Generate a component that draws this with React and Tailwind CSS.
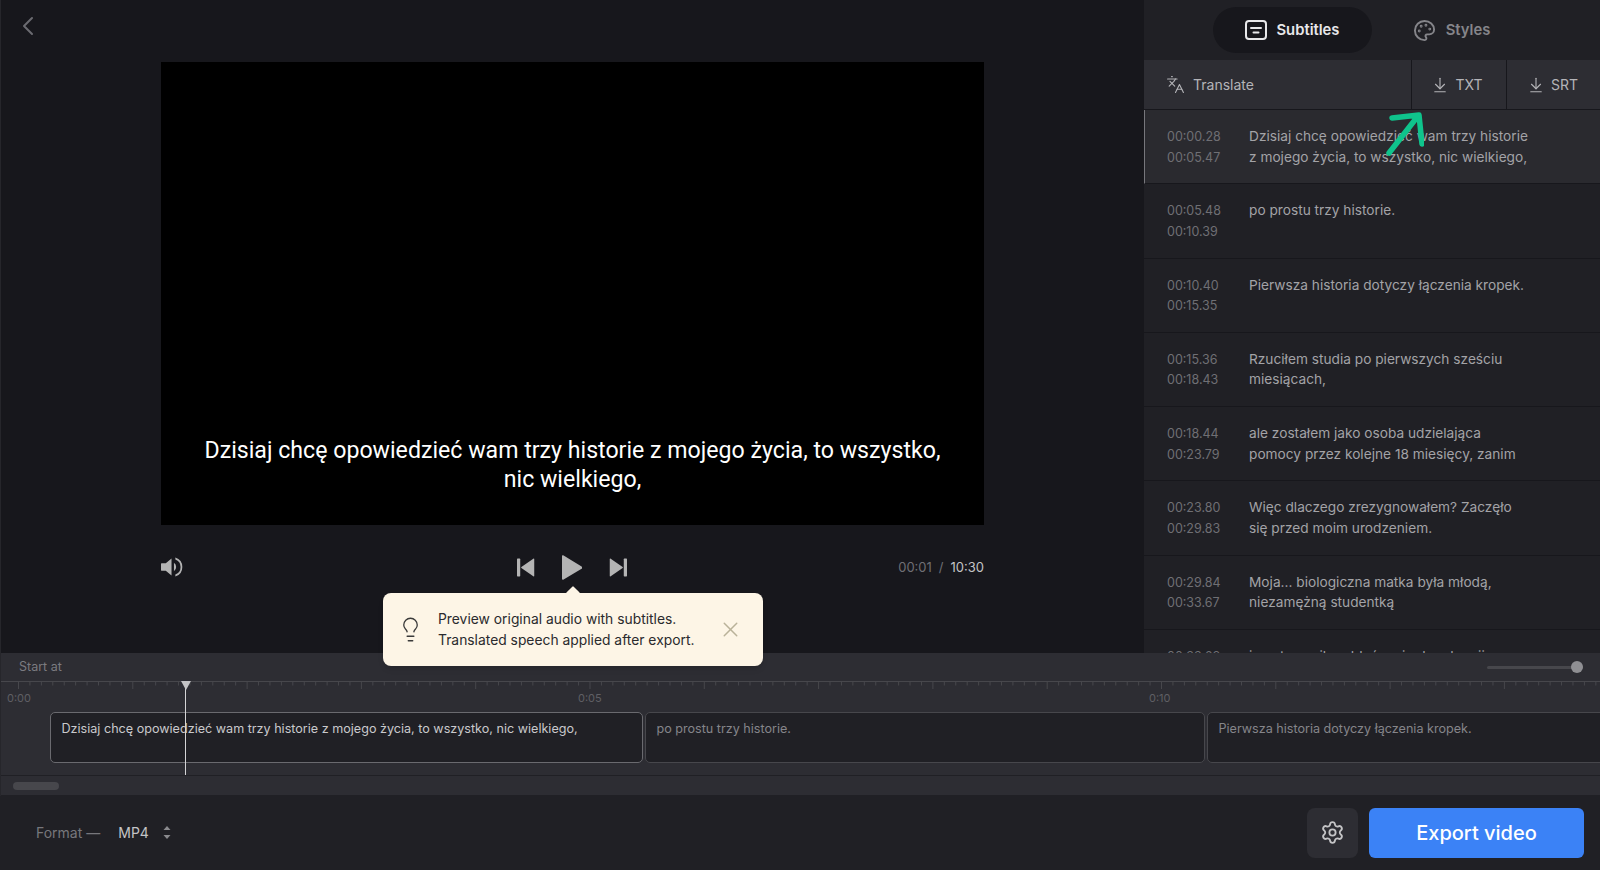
import React from "react";
import { ChevronLeft, Languages, ArrowDownToLine, Palette, Lightbulb, X, Settings } from "lucide-react";

const rows = [
  ["00:00.28", "00:05.47", "Dzisiaj chcę opowiedzieć wam trzy historie", "z mojego życia, to wszystko, nic wielkiego,"],
  ["00:05.48", "00:10.39", "po prostu trzy historie.", ""],
  ["00:10.40", "00:15.35", "Pierwsza historia dotyczy łączenia kropek.", ""],
  ["00:15.36", "00:18.43", "Rzuciłem studia po pierwszych sześciu", "miesiącach,"],
  ["00:18.44", "00:23.79", "ale zostałem jako osoba udzielająca", "pomocy przez kolejne 18 miesięcy, zanim"],
  ["00:23.80", "00:29.83", "Więc dlaczego zrezygnowałem? Zaczęło", "się przed moim urodzeniem."],
  ["00:29.84", "00:33.67", "Moja... biologiczna matka była młodą,", "niezamężną studentką"],
  ["00:33.68", "00:38.12", "i postanowiła oddać mnie do adopcji.", ""],
];

const ticks = Array.from({ length: 140 }, (_, i) => i);

function SubtitleRow({ r, active }) {
  return (
    <div className={`h-[74.3px] shrink-0 flex pt-[16px] border-b border-[#17171c] leading-[20.5px] ${active ? "bg-[#2a2a2f] border-l border-l-[#77777c] pl-[22px]" : "pl-[23px]"}`}>
      <div className="w-[82px] shrink-0 text-[#6f6f74] text-[12.5px] pt-[1px]">
        <div>{r[0]}</div>
        <div>{r[1]}</div>
      </div>
      <div className="text-[#a3a3a7] whitespace-nowrap text-[13.7px]">
        <div>{r[2]}</div>
        <div>{r[3]}</div>
      </div>
    </div>
  );
}

function Clip({ width, active, children }) {
  return (
    <div className={`h-[51px] shrink-0 rounded-[5px] bg-[#202025] pl-[10.5px] pt-[7px] text-[12.6px] leading-[18px] whitespace-nowrap ${active ? "border-[1.5px] border-[#6a6a6f] text-[#c9c9cc]" : "border border-[#47474c] text-[#85858a]"}`} style={{ width }}>
      {children}
    </div>
  );
}

export default function App() {
  return (
    <div className="w-[1600px] h-[870px] overflow-hidden flex flex-col bg-[#17171c] font-['Inter','Noto_Sans',sans-serif]">
      <div className="h-[653px] shrink-0 flex relative">
        {/* Editor */}
        <div className="w-[1144px] shrink-0 border-l border-[#26262b] relative z-10">
          <div className="h-[62px] pl-[11px] pt-[10px] text-[#6b6b70]">
            <ChevronLeft size={32} strokeWidth={1.5} />
          </div>
          <div className="ml-[160px] w-[823px] h-[463px] bg-black flex flex-col items-center justify-end pb-[31px] text-white font-['Roboto',sans-serif] text-[23.15px] leading-[28.5px]">
            <div>Dzisiaj chcę opowiedzieć wam trzy historie z mojego życia, to wszystko,</div>
            <div>nic wielkiego,</div>
          </div>
          <div className="ml-[160px] w-[823px] h-[84px] grid grid-cols-3 items-center">
            <svg width="22" height="22" viewBox="0 0 23 22" fill="#b4b4b4">
              <path d="M0.5 7h4.5L11 2v18l-6-5H0.5a.5.5 0 0 1-.5-.5v-7a.5.5 0 0 1 .5-.5z" />
              <path d="M13.5 6.5a5.5 5.5 0 0 1 0 9z" />
              <path d="M15 1a10.5 10.5 0 0 1 0 20v-2.2a8.3 8.3 0 0 0 0-15.6z" />
            </svg>
            <div className="flex items-center justify-center gap-[27px] pr-[1px]">
              <svg width="18" height="19" viewBox="0 0 19 19" fill="#b4b4b4">
                <rect x="0" y="0" width="3.4" height="19" rx="0.7" />
                <path d="M18.2 0.6v17.8a.6.6 0 0 1-1 .4L4.6 10a.7.7 0 0 1 0-1L17.2.2a.6.6 0 0 1 1 .4z" />
              </svg>
              <svg width="20" height="25" viewBox="0 0 20 25" fill="#b4b4b4">
                <path d="M0 1.2v22.6a1 1 0 0 0 1.6.8l18-10.8a1.3 1.3 0 0 0 0-2.2L1.6.4A1 1 0 0 0 0 1.2z" />
              </svg>
              <svg width="18" height="19" viewBox="0 0 19 19" fill="#b4b4b4">
                <rect x="15.6" y="0" width="3.4" height="19" rx="0.7" />
                <path d="M.8.6v17.8a.6.6 0 0 0 1 .4L14.4 10a.7.7 0 0 0 0-1L1.8.2a.6.6 0 0 0-1 .4z" />
              </svg>
            </div>
            <div className="text-right text-[13px] text-[#6f6f74] pt-[2px]">
              00:01<span className="mx-[7px]">/</span><span className="text-[#c4c4c6]">10:30</span>
            </div>
          </div>
          {/* Hint tooltip */}
          <div className="absolute left-[382px] top-[593px] w-[380px] h-[73px] rounded-[8px] bg-[#fdf5e6] flex items-center pl-[14px] shadow-md">
            <div className="absolute -top-[5px] left-[185px] w-[10px] h-[10px] rotate-45 bg-[#fdf5e6] rounded-[1px]" />
            <Lightbulb size={27} strokeWidth={1.15} className="text-[#3a3a3a] shrink-0" />
            <div className="ml-[14px] text-[13.85px] leading-[20.5px] text-[#2a2a2d] whitespace-nowrap">
              <div>Preview original audio with subtitles.</div>
              <div>Translated speech applied after export.</div>
            </div>
            <X size={25} strokeWidth={1.4} className="ml-[24px] text-[#b9b299] shrink-0" />
          </div>
        </div>

        {/* Sidebar */}
        <div className="flex-1 min-w-0 bg-[#202025] flex flex-col relative">
          <div className="h-[60px] shrink-0 flex items-start justify-center pt-[7px]">
            <div className="w-[159px] h-[46px] rounded-full bg-[#17171c] flex items-center justify-center gap-[9px] text-[#e8e8ea] text-[14.8px] font-semibold">
              <svg width="22" height="20" viewBox="0 0 22 20" fill="none" stroke="#e8e8ea" strokeWidth="2" strokeLinecap="round">
                <rect x="1" y="1" width="20" height="18" rx="3" />
                <path d="M6 8h10M8.5 12.5h5" />
              </svg>
              <span className="pt-[1px]">Subtitles</span>
            </div>
            <div className="w-[159px] h-[46px] flex items-center justify-center gap-[10px] text-[#85858a] text-[14.8px] font-semibold">
              <Palette size={23} strokeWidth={2} />
              <span className="pt-[1px]">Styles</span>
            </div>
          </div>
          <div className="h-[50px] shrink-0 flex bg-[#2d2d33] border-b border-[#17171c] text-[14px] text-[#b4b4b8]">
            <div className="w-[267px] shrink-0 flex items-center pl-[22px] gap-[8px]">
              <Languages size={19} strokeWidth={1.4} />
              Translate
            </div>
            <div className="w-[95px] shrink-0 flex items-center justify-center gap-[6px] border-l border-[#17171c] pr-[4px]">
              <ArrowDownToLine size={18} strokeWidth={1.5} />
              TXT
            </div>
            <div className="flex-1 flex items-center justify-center gap-[6px] border-l border-[#17171c] pr-[2px]">
              <ArrowDownToLine size={18} strokeWidth={1.5} />
              SRT
            </div>
          </div>
          <div className="flex-1 min-h-0 overflow-hidden">
            {rows.map((r, i) => (
              <SubtitleRow key={r[0]} r={r} active={i === 0} />
            ))}
          </div>
          <svg className="absolute left-[242px] top-[112px]" width="38" height="44" viewBox="0 0 38 44" fill="none" stroke="#0fc48c" strokeWidth="5.5" strokeLinecap="round" strokeLinejoin="round">
            <path d="M3 41 32 4M6 6 33 3l3 29" />
          </svg>
        </div>
      </div>

      {/* Timeline */}
      <div className="h-[143px] shrink-0 bg-[#2d2d33] border-l border-[#26262b] flex flex-col relative overflow-hidden">
        <div className="h-[28px] shrink-0 flex items-center justify-between pl-[18px] pr-[17px] text-[12.5px] text-[#7b7b80]">
          <span>Start at</span>
          <div className="w-[96px] h-[3px] rounded-full bg-[#47474c] relative">
            <div className="absolute right-0 -top-[4.5px] w-[12px] h-[12px] rounded-full bg-[#8f8f93]" />
          </div>
        </div>
        <svg className="shrink-0 block -ml-px" width="1600" height="10" viewBox="0 0 1600 10">
          <line x1="0" y1="0.5" x2="1600" y2="0.5" stroke="#47474c" />
          {ticks.map((i) => (
            <line key={i} x1={18.5 + i * 11.43} y1="1" x2={18.5 + i * 11.43} y2={i % 10 === 0 ? 8 : 4.5} stroke="#47474c" />
          ))}
        </svg>
        <div className="h-[21px] shrink-0 flex pl-[6px] pb-[7px] items-center text-[11px] text-[#5f5f64]">
          <div className="w-[571px] shrink-0">0:00</div>
          <div className="w-[571px] shrink-0">0:05</div>
          <div className="w-[171px] shrink-0">0:10</div>
        </div>
        <div className="h-[51px] shrink-0 flex gap-[2px] pl-[49px]">
          <Clip width={593} active>Dzisiaj chcę opowiedzieć wam trzy historie z mojego życia, to wszystko, nic wielkiego,</Clip>
          <Clip width={560}>po prostu trzy historie.</Clip>
          <Clip width={500}>Pierwsza historia dotyczy łączenia kropek.</Clip>
        </div>
        <div className="h-[12px] shrink-0" />
        <div className="h-[21px] shrink-0 border-y border-[#202025] pl-[13px] pt-[6px] -ml-px">
          <div className="w-[46px] h-[8px] rounded-full bg-[#47474c]" />
        </div>
        {/* Playhead */}
        <div className="absolute left-[184px] top-[28px] h-[94px] w-px bg-[#d4d4d6]" />
        <div className="absolute left-[179.5px] top-[28px] w-0 h-0 border-x-[5px] border-x-transparent border-t-[9px] border-t-[#c4c4c6]" />
      </div>

      {/* Footer */}
      <div className="flex-1 min-h-0 bg-[#202025] flex items-center justify-between pl-[36px] pr-[16px] pb-[1px]">
        <div className="flex items-center text-[14px]">
          <span className="text-[#77777c]">Format —</span>
          <span className="ml-[18px] text-[#c4c4c6]">MP4</span>
          <svg className="ml-[14px]" width="8" height="15" viewBox="0 0 8 15" fill="#8a8a8e">
            <path d="M4 1 7.5 5h-7zM4 14 .5 10h7z" />
          </svg>
        </div>
        <div className="flex items-center gap-[11px]">
          <div className="w-[51px] h-[50px] rounded-[8px] bg-[#2d2d33] flex items-center justify-center text-[#c4c4c6]">
            <Settings size={25} strokeWidth={1.75} />
          </div>
          <div className="w-[215px] h-[50px] rounded-[6px] bg-[#3b82f6] flex items-center justify-center text-white text-[20px] font-medium">
            Export video
          </div>
        </div>
      </div>
    </div>
  );
}
